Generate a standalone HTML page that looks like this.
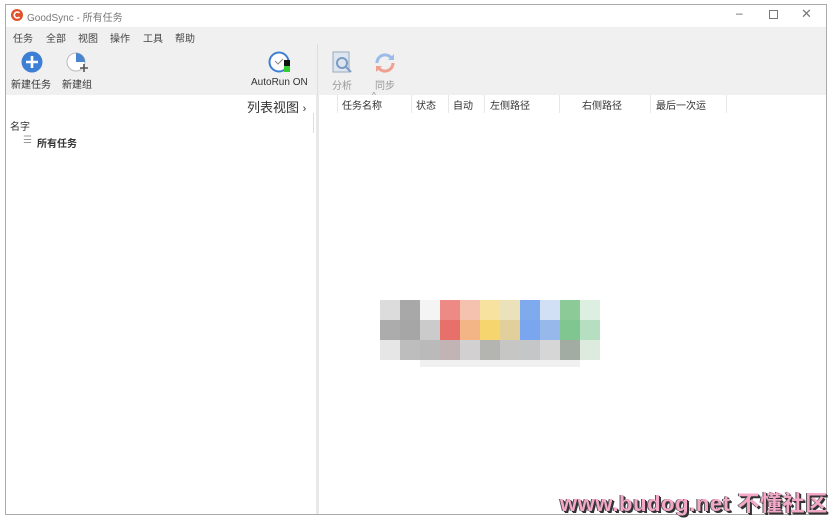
<!DOCTYPE html>
<html><head><meta charset="utf-8"><style>
*{margin:0;padding:0;box-sizing:border-box}
body{width:834px;height:520px;background:#fff;position:relative;overflow:hidden;font-family:"Liberation Sans","Noto Sans CJK SC",sans-serif;font-size:10px;color:#222}
.a{position:absolute}
#win{left:5px;top:4px;width:822px;height:511px;border:1px solid #aaa;background:#fff}
.gray{background:#f0f0f0}
.t{color:#333;white-space:nowrap}
.sep{position:absolute;top:95px;width:1px;height:18px;background:#e8e8e8}
.cell{position:absolute;width:20px;height:20px}
.mn{position:absolute;top:30px;font-size:10px;color:#444}
</style></head><body>
<div id="win" class="a"></div>
<svg class="a" style="left:11px;top:9px" width="12" height="12"><circle cx="6" cy="6" r="6" fill="#e0522a"/><path d="M8.5 4 A3 3 0 1 0 8.5 8" stroke="#fff" stroke-width="1.6" fill="none"/></svg>
<div class="a t" style="left:27px;top:9px;color:#777;font-size:10px">GoodSync - 所有任务</div>
<div class="a t" style="left:736px;top:6px;color:#666;font-size:12px">–</div>
<div class="a" style="left:769px;top:10px;width:9px;height:9px;border:1px solid #777"></div>
<div class="a t" style="left:801px;top:6px;color:#777;font-size:13px">✕</div>
<div class="a gray" style="left:6px;top:27px;width:820px;height:68px"></div>
<div class="mn" style="left:13px">任务</div><div class="mn" style="left:46px">全部</div><div class="mn" style="left:78px">视图</div><div class="mn" style="left:110px">操作</div><div class="mn" style="left:143px">工具</div><div class="mn" style="left:175px">帮助</div>
<svg class="a" style="left:21px;top:51px" width="22" height="22"><circle cx="11" cy="11" r="10.5" fill="#3d7fd4"/><path d="M11 5v12M5 11h12" stroke="#fff" stroke-width="2.6"/></svg>
<div class="a t" style="left:11px;top:76px">新建任务</div>
<svg class="a" style="left:66px;top:52px" width="24" height="22"><circle cx="10" cy="10" r="9" fill="#fff" stroke="#bbb"/><path d="M10 1a9 9 0 0 1 9 9h-9z" fill="#4a86d0"/><path d="M18 12v8M14 16h8" stroke="#555" stroke-width="1.6"/></svg>
<div class="a t" style="left:62px;top:76px">新建组</div>
<svg class="a" style="left:268px;top:51px" width="26" height="24"><circle cx="11" cy="11" r="9.5" fill="#fff" stroke="#3d7fd4" stroke-width="2"/><path d="M7 10l3 3 5-5" stroke="#888" fill="none"/><rect x="16" y="9" width="6" height="6" fill="#111"/><rect x="16" y="15" width="6" height="6" fill="#3c3"/></svg>
<div class="a t" style="left:251px;top:77px">AutoRun ON</div>
<div class="a" style="left:317px;top:44px;width:1px;height:51px;background:#ddd"></div>
<svg class="a" style="left:332px;top:51px" width="22" height="24"><rect x="1" y="1" width="16" height="20" fill="#dde6f0" stroke="#9ab"/><circle cx="10" cy="12" r="5" fill="none" stroke="#7a9cc4" stroke-width="2"/><path d="M14 16l5 5" stroke="#7a9cc4" stroke-width="2"/></svg>
<div class="a t" style="left:332px;top:77px;color:#999">分析</div>
<svg class="a" style="left:373px;top:51px" width="24" height="24"><path d="M4 12a8 8 0 0 1 15-4" stroke="#9bbce8" stroke-width="3" fill="none"/><path d="M20 12a8 8 0 0 1-15 4" stroke="#f0a090" stroke-width="3" fill="none"/><path d="M21 3v6h-6z" fill="#9bbce8"/><path d="M3 21v-6h6z" fill="#f0a090"/></svg>
<div class="a t" style="left:375px;top:77px;color:#999">同步</div>
<div class="a" style="left:316px;top:95px;width:3px;height:419px;background:#e8e8e8"></div>
<div class="a t" style="left:247px;top:97px;font-size:13px;color:#333">列表视图 <span style="font-size:11px">›</span></div>
<div class="a" style="left:313px;top:113px;width:1px;height:20px;background:#ddd"></div>
<div class="a t" style="left:10px;top:118px">名字</div>
<div class="a t" style="left:23px;top:135px;color:#999">☰</div>
<div class="a t" style="left:37px;top:135px;font-weight:bold">所有任务</div>
<div class="sep" style="left:337px"></div><div class="sep" style="left:411px"></div><div class="sep" style="left:448px"></div><div class="sep" style="left:484px"></div><div class="sep" style="left:559px"></div><div class="sep" style="left:650px"></div><div class="sep" style="left:726px"></div>
<div class="a t" style="left:342px;top:97px">任务名称</div>
<div class="a t" style="left:372px;top:91px;color:#888;font-size:8px">^</div>
<div class="a t" style="left:416px;top:97px">状态</div>
<div class="a t" style="left:453px;top:97px">自动</div>
<div class="a t" style="left:490px;top:97px">左侧路径</div>
<div class="a t" style="left:582px;top:97px">右侧路径</div>
<div class="a t" style="left:656px;top:97px">最后一次运</div>
<div class="a" id="m" style="left:380px;top:300px">
<div class="cell" style="left:0;top:0;background:#dcdcdc"></div><div class="cell" style="left:20px;top:0;background:#a8a8a8"></div><div class="cell" style="left:40px;top:0;background:#f4f4f4"></div><div class="cell" style="left:60px;top:0;background:#ee8a86"></div><div class="cell" style="left:80px;top:0;background:#f5c2b0"></div><div class="cell" style="left:100px;top:0;background:#f8e2a0"></div><div class="cell" style="left:120px;top:0;background:#ebe1bb"></div><div class="cell" style="left:140px;top:0;background:#7fabee"></div><div class="cell" style="left:160px;top:0;background:#d2e0f6"></div><div class="cell" style="left:180px;top:0;background:#8ccb98"></div><div class="cell" style="left:200px;top:0;background:#dcefe0"></div>
<div class="cell" style="left:0;top:20px;background:#acacac"></div><div class="cell" style="left:20px;top:20px;background:#a6a6a6"></div><div class="cell" style="left:40px;top:20px;background:#cbcbcb"></div><div class="cell" style="left:60px;top:20px;background:#e8706a"></div><div class="cell" style="left:80px;top:20px;background:#f3b486"></div><div class="cell" style="left:100px;top:20px;background:#f6d46e"></div><div class="cell" style="left:120px;top:20px;background:#e2d09c"></div><div class="cell" style="left:140px;top:20px;background:#7aa6ef"></div><div class="cell" style="left:160px;top:20px;background:#96b8ea"></div><div class="cell" style="left:180px;top:20px;background:#80c690"></div><div class="cell" style="left:200px;top:20px;background:#b6dec0"></div>
<div class="cell" style="left:0;top:40px;background:#e6e6e6"></div><div class="cell" style="left:20px;top:40px;background:#bdbdbd"></div><div class="cell" style="left:40px;top:40px;background:#bababa"></div><div class="cell" style="left:60px;top:40px;background:#c2b4b4"></div><div class="cell" style="left:80px;top:40px;background:#d2d0d0"></div><div class="cell" style="left:100px;top:40px;background:#b4b4b0"></div><div class="cell" style="left:120px;top:40px;background:#c6c6c4"></div><div class="cell" style="left:140px;top:40px;background:#c4c6c8"></div><div class="cell" style="left:160px;top:40px;background:#d6d6d6"></div><div class="cell" style="left:180px;top:40px;background:#a2aca2"></div><div class="cell" style="left:200px;top:40px;background:#dcebde"></div>
<div class="a" style="left:40px;top:60px;width:160px;height:7px;background:#f0f0f0"></div>
</div>
<div class="a t" style="left:560px;top:486px;font-size:22px;font-weight:bold;color:#f4a8c8;text-shadow:1px 1px 0 #333,-1px 0 0 #555,2px 2px 0 #333;letter-spacing:0.6px">www.budog.net 不懂社区</div>
</body></html>
